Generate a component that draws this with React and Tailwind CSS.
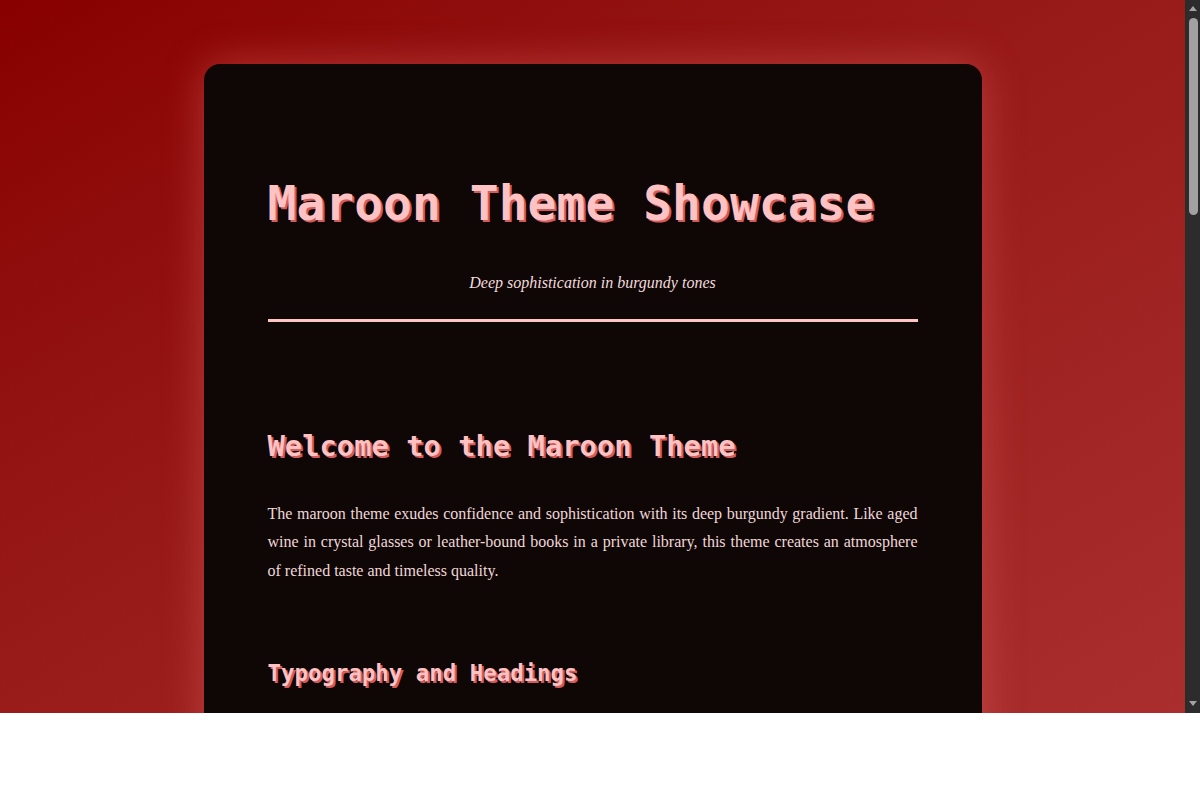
import React from "react";

const mono = { fontFamily: '"DejaVu Sans Mono", "Liberation Mono", monospace' };
const serif = { fontFamily: '"Liberation Serif", "DejaVu Serif", serif' };

function Scrollbar() {
  return (
    <div className="w-[15px] h-full bg-[#2c2c2c] flex flex-col items-center">
      <svg width="10" height="17" viewBox="0 0 10 17" className="shrink-0">
        <path d="M1 11 L5 6 L9 11 Z" fill="#a3a3a3" />
      </svg>
      <div className="w-[9px] h-[197px] ml-[1px] rounded-full bg-[#a1a1a1] mt-[1px]" />
      <div className="flex-1" />
      <svg width="10" height="17" viewBox="0 0 10 17" className="shrink-0">
        <path d="M1 5 L5 10 L9 5 Z" fill="#a3a3a3" />
      </svg>
    </div>
  );
}

export default function App() {
  return (
    <div className="h-[713px] flex overflow-hidden">
      <div className="flex-1 h-full overflow-hidden bg-gradient-to-br from-[#880000] to-[#aa2e2e]">
        <div className="pt-16">
          <div className="w-[778px] mx-auto rounded-2xl bg-[#0f0606] px-16 pt-[110px] pb-16 shadow-[0_0_40px_rgba(255,130,130,0.35)] min-h-[700px]">
            <header className="border-b-[3px] border-[#ffc4c4] pb-6">
              <h1
                className="text-[48px] leading-[58px] font-bold text-[#ffc2c2] [text-shadow:2px_2px_0_#d25c5c]"
                style={mono}
              >
                Maroon Theme Showcase
              </h1>
              <p
                className="mt-[39px] text-center italic text-[16px] leading-[24px] text-[#f2dcdc]"
                style={serif}
              >
                Deep sophistication in burgundy tones
              </p>
            </header>

            <section className="mt-[107px]">
              <h2
                className="text-[28.8px] leading-[34.56px] font-bold text-[#ffc2c2] [text-shadow:2px_2px_0_#d25c5c]"
                style={mono}
              >
                Welcome to the Maroon Theme
              </h2>
              <p
                className="mt-[36px] text-[16px] leading-[28.8px] text-[#f0d8d8] text-justify"
                style={serif}
              >
                The maroon theme exudes confidence and sophistication with its deep burgundy gradient. Like aged
                wine in crystal glasses or leather-bound books in a private library, this theme creates an atmosphere
                of refined taste and timeless quality.
              </p>
            </section>

            <section className="mt-[74px]">
              <h3
                className="text-[22.4px] leading-[26.88px] font-bold text-[#ffc2c2] [text-shadow:2px_2px_0_#d25c5c]"
                style={mono}
              >
                Typography and Headings
              </h3>
            </section>
          </div>
        </div>
      </div>
      <Scrollbar />
    </div>
  );
}
